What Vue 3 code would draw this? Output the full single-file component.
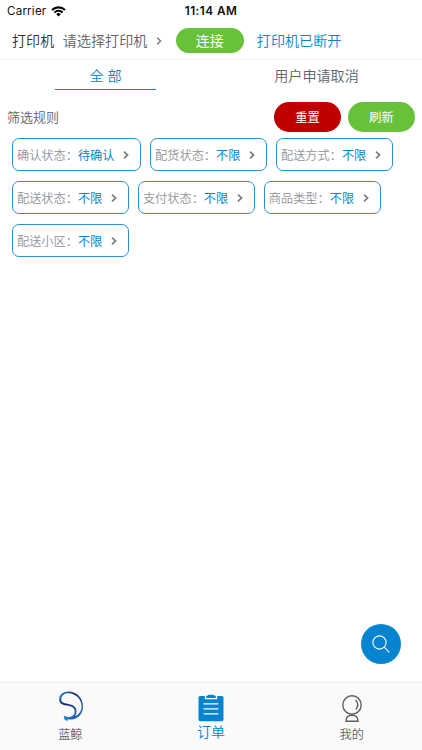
<template>
  <div class="page">
    <header class="status-bar">
      <div class="carrier">
        <span>Carrier</span>
        <svg class="wifi" viewBox="0 0 16 12">
          <path d="M0.3 4.1 A11 11 0 0 1 15.7 4.1 L14.1 5.8 A8.7 8.7 0 0 0 1.9 5.8 Z" />
          <path d="M2.9 6.7 A7.3 7.3 0 0 1 13.1 6.7 L11.5 8.3 A5 5 0 0 0 4.5 8.3 Z" />
          <path d="M5.5 9.3 A3.6 3.6 0 0 1 10.5 9.3 L8 11.8 Z" />
        </svg>
      </div>
      <span class="time">11:14 AM</span>
    </header>

    <div class="printer-bar">
      <span class="printer-title">打印机</span>
      <span class="printer-select">请选择打印机</span>
      <svg class="arrow" viewBox="0 0 6 8"><path d="M1.2 0.8 L4.6 4 L1.2 7.2" /></svg>
      <button class="btn connect">连接</button>
      <span class="printer-state">打印机已断开</span>
    </div>

    <nav class="tabs">
      <div class="tab active"><span>全 部</span></div>
      <div class="tab"><span>用户申请取消</span></div>
    </nav>

    <div class="filter-head">
      <span class="filter-title">筛选规则</span>
      <button class="btn reset">重置</button>
      <button class="btn refresh">刷新</button>
    </div>

    <main class="filters">
      <div v-for="item in filters" :key="item.label" class="chip">
        <span class="chip-label">{{ item.label }}：</span>
        <span class="chip-value">{{ item.value }}</span>
        <svg class="chip-arrow" viewBox="0 0 6 8"><path d="M1 0.7 L4.6 4 L1 7.3" /></svg>
      </div>
    </main>

    <button class="search" aria-label="搜索">
      <svg viewBox="0 0 18 18">
        <circle cx="7.5" cy="7.5" r="6.6" />
        <path d="M12.2 12.2 L17.3 17.3" />
      </svg>
    </button>

    <footer class="tabbar">
      <div class="tabbar-item">
        <svg class="icon-whale" viewBox="0 0 28 32">
          <defs>
            <linearGradient id="whale" x1="0" y1="0" x2="0.9" y2="1">
              <stop offset="0" stop-color="#2ba4df" />
              <stop offset="0.35" stop-color="#171f70" />
              <stop offset="0.7" stop-color="#2453a5" />
              <stop offset="1" stop-color="#1583c9" />
            </linearGradient>
            <linearGradient id="tail" x1="0" y1="0" x2="1" y2="0">
              <stop offset="0" stop-color="#1b9ade" />
              <stop offset="1" stop-color="#2453a5" />
            </linearGradient>
          </defs>
          <path
            fill="url(#whale)"
            fill-rule="evenodd"
            d="M3.2 10.5 C2.6 4.8 7 1.6 12.5 1.6 C20.5 1.6 27 8.2 27 16.5 C27 24 22 29.6 14.5 29.4 L11.8 28.9 L11.2 30.8 C10.3 29.2 9.4 28.7 7.8 28.7 C8.6 27.9 8.8 27 8.5 25.6 C9.8 27.2 12 27.8 14.4 27.2 C17.2 26.4 18.6 24.3 18.7 21.8 C18.8 17.6 15.5 16.5 11 15.6 C6.5 14.8 3.5 13.6 3.2 10.5 Z M5.3 8.9 C5 12 7.5 13 11.5 13.7 C16.8 14.6 20.9 16.6 20.5 21.6 C20.4 23.3 19.9 24.8 19 26 C23.2 24.3 25.6 20.8 25.6 16.4 C25.6 9.3 20 3.5 12.8 3.2 C8.8 3.1 5.6 5 5.3 8.9 Z"
          />
          <path fill="url(#tail)" d="M7.6 26 L12 27 L17 26.5 L14.5 29.3 L12 29.2 L11 31 L8.6 29.6 Z" />
        </svg>
        <span>蓝鲸</span>
      </div>
      <div class="tabbar-item current">
        <svg class="icon-order" viewBox="0 0 26 28">
          <path fill="#0784d0" d="M2 2 H6.8 V5.2 H19.2 V2 H24 Q25.5 2 25.5 3.5 V25.5 Q25.5 27.3 24 27.3 H2 Q0.5 27.3 0.5 25.5 V3.5 Q0.5 2 2 2 Z" />
          <path fill="#0784d0" d="M8.2 4.1 V1.8 H9.5 Q10 0.8 11 0.8 H15 Q16 0.8 16.5 1.8 H17.8 V4.1 Z" />
          <path stroke="#fff" stroke-width="1.2" stroke-linecap="round" d="M6 9.8 H20 M6 14.8 H20 M6 19.8 H20" />
        </svg>
        <span>订单</span>
      </div>
      <div class="tabbar-item">
        <svg class="icon-mine" viewBox="0 0 22 28">
          <circle cx="11" cy="10" r="9.2" />
          <path d="M14.6 5 Q18.6 9.5 15 14.6" />
          <path d="M5 26.3 C5 22.5 7.5 20.2 11 20.2 S17 22.5 17 26.3 Z" />
        </svg>
        <span>我的</span>
      </div>
    </footer>
  </div>
</template>

<script setup>
const filters = [
  { label: '确认状态', value: '待确认' },
  { label: '配货状态', value: '不限' },
  { label: '配送方式', value: '不限' },
  { label: '配送状态', value: '不限' },
  { label: '支付状态', value: '不限' },
  { label: '商品类型', value: '不限' },
  { label: '配送小区', value: '不限' }
]
</script>

<style>
body {
  background: #fff;
}
</style>

<style scoped>
.page {
  position: relative;
  display: flex;
  flex-direction: column;
  width: 422px;
  height: 750px;
  overflow: hidden;
  background: #fff;
  color: #606266;
  font-family: Inter, "Noto Sans CJK SC", sans-serif;
  font-weight: 350;
  box-sizing: border-box;
}

svg {
  display: block;
  fill: none;
  flex-shrink: 0;
}

.status-bar {
  display: grid;
  grid-template-columns: 1fr auto 1fr;
  align-items: center;
  height: 22px;
  color: #111;
  font-size: 11.6px;
}

.carrier {
  display: flex;
  align-items: center;
  gap: 5px;
  padding-left: 7px;
  font-weight: 400;
  letter-spacing: 0.2px;
}

.wifi {
  width: 15px;
  height: 12px;
  fill: #000;
}

.time {
  font-size: 11.8px;
  font-weight: 600;
  letter-spacing: 0.45px;
}

.printer-bar {
  display: flex;
  align-items: center;
  height: 38px;
  padding: 0 0 0 12px;
  border-bottom: 1px solid #f1f1f1;
  box-sizing: border-box;
  font-size: 14.1px;
  line-height: 20px;
  white-space: nowrap;
}

.printer-title {
  margin-right: 8.5px;
  color: #303133;
}

.arrow {
  width: 6px;
  height: 8px;
  margin: 1px 13.5px 0 9px;
  stroke: #777;
  stroke-width: 1.4;
}

.btn {
  padding: 0;
  border: 0;
  border-radius: 20px;
  color: #fff;
  font-family: inherit;
  font-weight: 400;
}

.connect {
  width: 68px;
  height: 25px;
  margin: 0 13px 0 0;
  background: #67c23a;
  font-size: 14px;
  line-height: 25px;
}

.printer-state {
  color: #0784d0;
}

.tabs {
  display: flex;
  height: 30px;
  font-size: 14.1px;
}

.tab {
  display: flex;
  flex: 1;
  justify-content: center;
}

.tab span {
  width: 101px;
  height: 30px;
  box-sizing: border-box;
  line-height: 32px;
  text-align: center;
  white-space: nowrap;
}

.tab.active span {
  border-bottom: 1px solid #0784d0;
  color: #0784d0;
}

.filter-head {
  display: flex;
  align-items: center;
  height: 48px;
  padding: 6px 7px 0;
  box-sizing: border-box;
  font-size: 13px;
}

.filter-title {
  flex: 1;
  padding-bottom: 2px;
}

.reset,
.refresh {
  width: 67px;
  height: 30px;
  font-size: 12.2px;
}

.reset {
  margin-right: 7px;
  background: #c00000;
}

.refresh {
  background: #67c23a;
}

.filters {
  display: flex;
  flex-wrap: wrap;
  align-content: flex-start;
  gap: 10px 8.6px;
  padding: 0 12px;
}

.chip {
  display: flex;
  align-items: center;
  height: 33px;
  padding: 0 11.2px 0 4px;
  border: 1px solid #2a91d3;
  border-radius: 7px;
  box-sizing: border-box;
  font-size: 12.2px;
  white-space: nowrap;
}

.chip-label {
  color: #909399;
}

.chip-value {
  color: #0784d0;
  font-weight: 400;
}

.chip-arrow {
  width: 6px;
  height: 8px;
  margin: 1px 0 0 8.8px;
  stroke: #7d7f84;
  stroke-width: 1.7;
}

.search {
  position: absolute;
  right: 21px;
  bottom: 86px;
  display: flex;
  align-items: center;
  justify-content: center;
  width: 40px;
  height: 40px;
  padding: 0;
  border: 0;
  border-radius: 50%;
  background: #0784d0;
}

.search svg {
  width: 18px;
  height: 18px;
  stroke: #fff;
  stroke-width: 1.1;
}

.tabbar {
  display: flex;
  height: 68px;
  margin-top: auto;
  border-top: 1px solid #ececec;
  background: #fafafa;
  box-sizing: border-box;
}

.tabbar-item {
  display: flex;
  flex: 1;
  flex-direction: column;
  align-items: center;
  font-size: 12.2px;
  line-height: 18px;
}

.tabbar-item.current {
  color: #0784d0;
  font-size: 14px;
}

.icon-whale {
  width: 28px;
  height: 32px;
  margin: 7px 0 4px;
}

.icon-order {
  width: 26px;
  height: 28px;
  margin: 11px 0 1px;
}

.icon-mine {
  width: 22px;
  height: 28px;
  margin: 12px 0 3px;
  stroke: #5c5d60;
  stroke-width: 1.4;
}
</style>
